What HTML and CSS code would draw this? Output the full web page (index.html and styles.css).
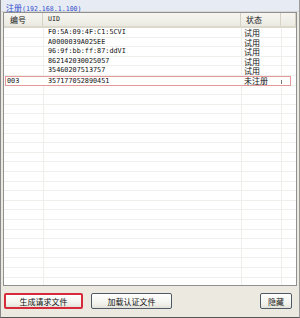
FILE: index.html
```html
<!DOCTYPE html>
<html>
  <head>
  <meta charset="utf-8">
  <link rel="stylesheet" href="styles.css">
  </head>
  <body>
    <div class="win">
      <div class="title"><span class="cn">注册</span><span class="lat">(192.168.1.100)</span></div>
      <div class="list">
        <div class="head">
          <div class="hc cn">编号</div>
          <div class="hc lat">UID</div>
          <div class="hc cn">状态</div>
          <div class="hc"></div>
        </div>
        <div class="rows">
          <div class="row"><div class="c1"></div><div class="c2">F0:5A:09:4F:C1:5CVI</div><div class="c3">试用</div><div></div></div>
          <div class="row"><div class="c1"></div><div class="c2">A0000039A025EE</div><div class="c3">试用</div><div></div></div>
          <div class="row"><div class="c1"></div><div class="c2">96:9f:bb:ff:87:ddVI</div><div class="c3">试用</div><div></div></div>
          <div class="row"><div class="c1"></div><div class="c2">862142030025057</div><div class="c3">试用</div><div></div></div>
          <div class="row"><div class="c1"></div><div class="c2">35460207513757</div><div class="c3">试用</div><div></div></div>
          <div class="row sel"><div class="c1 c2n">003</div><div class="c2">357177052890451</div><div class="c3">未注册</div><div class="c4"><span class="tick"></span></div></div>
        </div>
      </div>
      <div class="bar">
        <button class="btn hot">生成请求文件</button>
        <button class="btn">加载认证文件</button>
        <button class="btn last">隐藏</button>
      </div>
    </div>
  </body>
</html>
```

FILE: styles.css
```css
html, body { margin: 0; padding: 0; }
body { background-color: #ebe9e0; }
.cn { font-family: "Noto Sans CJK SC", sans-serif; font-size: 8px; }
.lat { font-family: "DejaVu Sans Mono", monospace; font-size: 6.6px; }
.win {
  width: 300px;
  height: 318px;
  box-sizing: border-box;
  border-left: 1px solid #8a8a8a;
  border-right: 1px solid #9a9a9a;
  border-bottom: 1px solid #555;
  background-color: #ebe9e0;
  display: flex;
  flex-direction: column;
}
.title {
  height: 12px;
  line-height: 11px;
  padding-left: 5px;
  background-color: #e7ebf3;
  color: #3350d0;
  white-space: nowrap;
  box-sizing: border-box;
  border-bottom: 1px solid #d8d8d8;
}
.list {
  margin: 0 2px;
  height: 272px;
  border: 1px solid #8e9092;
  background-color: #fff;
  display: flex;
  flex-direction: column;
}
.head {
  display: grid;
  grid-template-columns: 39px 198px 40px 1fr;
  height: 15px;
  box-sizing: border-box;
  background: linear-gradient(#f6f5f0, #ebeae2);
  border-bottom: 2px solid #dcd9cc;
}
.hc {
  line-height: 13px;
  color: #222;
  border-right: 1px solid #d6d3c6;
  padding-left: 5px;
}
.hc:first-child { padding-left: 6px; }
.rows {
  flex: 1;
  background-image:
    linear-gradient(to right, transparent 39px, #eeeeea 39px, #eeeeea 40px, transparent 40px,
      transparent 237px, #eeeeea 237px, #eeeeea 238px, transparent 238px,
      transparent 277px, #eeeeea 277px, #eeeeea 278px, transparent 278px),
    repeating-linear-gradient(to bottom, transparent 0, transparent 8.6px, #efefec 8.6px, #efefec 9.6px);
}
.row {
  display: grid;
  grid-template-columns: 39px 198px 40px 1fr;
  height: 9.6px;
  line-height: 9.6px;
  color: #111;
  white-space: nowrap;
}
.c2, .c2n { font-family: "DejaVu Sans Mono", monospace; font-size: 6.8px; }
.c2 { padding-left: 5px; }
.c3 { font-family: "Noto Sans CJK SC", sans-serif; font-size: 8px; padding-left: 3px; }
.c1 { padding-left: 1px; }
.row.sel {
  width: 286px;
  margin-left: 1px;
  box-sizing: border-box;
  border: 1px solid #e49a9a;
  height: 10px;
  line-height: 8px;
  grid-template-columns: 37px 198px 40px 1fr;
  background-color: #fff;
}
.c4 { position: relative; }
.tick {
  position: absolute;
  left: 0;
  top: 3px;
  width: 1px;
  height: 4px;
  background-color: #777;
}
.bar {
  flex: 1;
  display: flex;
  align-items: flex-start;
  padding: 7px 7px 0 3px;
  gap: 8px;
}
.btn {
  height: 16px;
  padding: 0;
  font-family: "Noto Sans CJK SC", sans-serif;
  font-size: 8px;
  color: #111;
  border: 1px solid #4f5a66;
  border-radius: 2px;
  background: linear-gradient(#ffffff, #f2f2ec 70%, #e2e1d9);
}
.btn.hot { width: 79px; border: 2px solid #d42a3a; }
.btn:nth-child(2) { width: 81px; }
.btn.last { width: 32px; margin-left: auto; }
```
